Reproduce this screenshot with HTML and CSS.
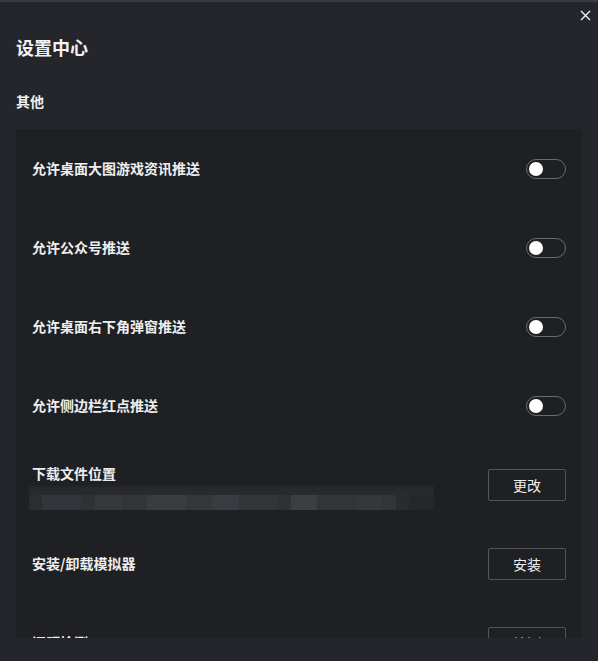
FILE: index.html
```html
<!DOCTYPE html>
<html lang="zh-CN">
<head>
    <meta charset="UTF-8">
    <meta name="viewport" content="width=device-width, initial-scale=1.0">
    <title>设置中心</title>
    <link rel="stylesheet" href="styles.css">
</head>
<body>
    <button class="close-btn" aria-label="关闭">
        <svg width="11" height="11" viewBox="0 0 11 11">
            <path d="M1 1 L10 10 M10 1 L1 10" stroke="#f2f2f2" stroke-width="1.4" fill="none"/>
        </svg>
    </button>

    <h1 class="title">设置中心</h1>
    <h2 class="section-title">其他</h2>

    <div class="panel">
        <div class="row">
            <span class="label">允许桌面大图游戏资讯推送</span>
            <span class="toggle"><span class="knob"></span></span>
        </div>
        <div class="row">
            <span class="label">允许公众号推送</span>
            <span class="toggle"><span class="knob"></span></span>
        </div>
        <div class="row">
            <span class="label">允许桌面右下角弹窗推送</span>
            <span class="toggle"><span class="knob"></span></span>
        </div>
        <div class="row">
            <span class="label">允许侧边栏红点推送</span>
            <span class="toggle"><span class="knob"></span></span>
        </div>
        <div class="row">
            <div class="path-col">
                <span class="label">下载文件位置</span>
                <div class="path-blur"></div>
            </div>
            <button class="btn">更改</button>
        </div>
        <div class="row">
            <span class="label">安装/卸载模拟器</span>
            <button class="btn">安装</button>
        </div>
        <div class="row">
            <span class="label">问题检测</span>
            <button class="btn">检测</button>
        </div>
    </div>
</body>
</html>
```

FILE: styles.css
```css
html, body {
    height: 100%;
}
body {
    margin: 0;
    background-color: #25262b;
    border-top: 2px solid #3a3b40;
    box-sizing: border-box;
    font-family: "Noto Sans CJK SC", "Noto Sans", sans-serif;
    color: #f0f0f0;
    position: relative;
    overflow: hidden;
}
.close-btn {
    position: absolute;
    top: 8px;
    right: 7px;
    background: none;
    border: none;
    padding: 0;
    width: 11px;
    height: 11px;
    cursor: pointer;
}
.close-btn svg {
    display: block;
}
.title {
    margin: 0;
    padding: 33px 16px 0;
    font-size: 18px;
    line-height: 24px;
    font-weight: 700;
    color: #f2f2f2;
}
.section-title {
    margin: 32px 16px 0;
    font-size: 14px;
    line-height: 20px;
    font-weight: 700;
    color: #f0f0f0;
}
.panel {
    margin: 18px 16px 0;
    height: 509px;
    background-color: #1f2024;
    overflow: hidden;
}
.row {
    height: 79px;
    padding: 0 16px;
    display: flex;
    align-items: center;
    justify-content: space-between;
}
.label {
    font-size: 14px;
    line-height: 20px;
    font-weight: 700;
    color: #eeeeee;
    position: relative;
    top: -1px;
}
.toggle {
    width: 38px;
    height: 18px;
    border: 1px solid #6a6b70;
    border-radius: 10px;
    position: relative;
    flex-shrink: 0;
}
.knob {
    position: absolute;
    left: 2px;
    top: 2px;
    width: 14px;
    height: 14px;
    border-radius: 50%;
    background-color: #ffffff;
}
.btn {
    width: 78px;
    height: 32px;
    background: transparent;
    border: 1px solid #55565a;
    border-radius: 2px;
    color: #f0f0f0;
    font-family: "Noto Sans CJK SC", "Noto Sans", sans-serif;
    font-size: 14px;
    cursor: pointer;
    flex-shrink: 0;
}
.path-col {
    display: flex;
    flex-direction: column;
    padding-top: 5px;
}
.path-col .label {
    display: block;
}
.path-blur {
    width: 405px;
    height: 26px;
    margin-left: -3px;
    background:
        linear-gradient(to right,
            #2c2d31 0, #2c2d31 13px,
            #34353a 13px, #34353a 52px,
            #303135 52px, #303135 66px,
            #37383c 66px, #37383c 93px,
            #333438 93px, #333438 118px,
            #3a3b3f 118px, #3a3b3f 158px,
            #35363a 158px, #35363a 183px,
            #3a3b40 183px, #3a3b40 210px,
            #343539 210px, #343539 248px,
            #303135 248px, #303135 262px,
            #3d3e42 262px, #3d3e42 288px,
            #333438 288px, #333438 327px,
            #36373b 327px, #36373b 353px,
            #333438 353px, #333438 367px,
            #2a2b2f 367px, #2a2b2f 380px,
            #26272b 380px, #26272b 405px) bottom / 100% 15px no-repeat,
        linear-gradient(to bottom, #1f2024 0, #27282c 4px, #2a2b2f 100%) top / 100% 11px no-repeat;
}
```
